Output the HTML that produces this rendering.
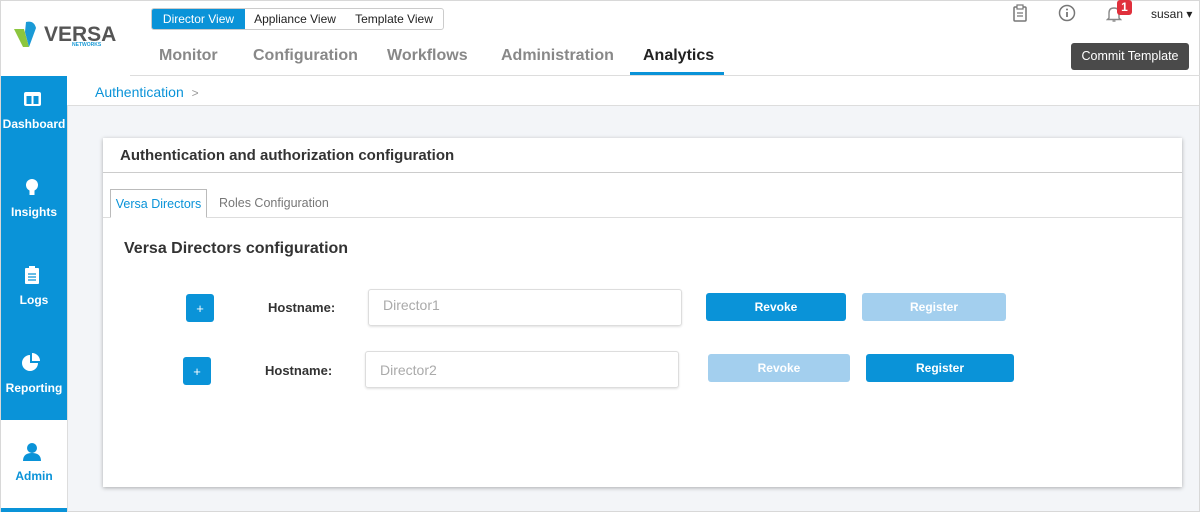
<!DOCTYPE html>
<html><head><meta charset="utf-8"><style>
*{box-sizing:border-box;margin:0;padding:0}
body{width:1200px;height:512px;overflow:hidden;font-family:"Liberation Sans",sans-serif;background:#fff;position:relative}
.abs{position:absolute}
.frame{left:0;top:0;width:1200px;height:512px;border:1px solid #d8d8d8}
.toggle{left:151px;top:8px;height:22px;border:1px solid #ccc;border-radius:3px;display:flex;font-size:12px;background:#fff}
.toggle div{line-height:20px;color:#222;text-align:center}
.toggle .on{background:#0a93d8;color:#fff;border-radius:2px 0 0 2px}
.nav{top:47px;font-size:16px;font-weight:bold;color:#888}
.side{left:1px;top:76px;width:66px;height:344px;background:#0a93d8}
.si{width:66px;text-align:center;color:#fff;font-size:12px;font-weight:bold;left:1px}
.main{left:67px;top:76px;width:1132px;height:435px;background:#f3f5f8}
.crumb{left:67px;top:76px;width:1132px;height:30px;background:#fff;border-bottom:1px solid #ddd}
.card{left:103px;top:138px;width:1079px;height:349px;background:#fff;box-shadow:0 1px 4px rgba(0,0,0,.3)}
.btn{height:28px;border-radius:3px;color:#fff;font-size:12px;font-weight:bold;text-align:center;line-height:28px}
.plus{width:28px;height:28px;background:#0a93d8;border-radius:3px;color:#fff;text-align:center;line-height:30px;font-size:13px}
.inp{height:37px;border:1px solid #ddd;border-radius:3px;box-shadow:0 1px 2px rgba(0,0,0,.12);color:#aaa;font-size:14px;padding-left:14px;line-height:30px}
.lab{font-size:13px;font-weight:bold;color:#333}
</style></head><body>
<div class="abs frame"></div>
<svg class="abs" style="left:14px;top:20px" width="30" height="28" viewBox="0 0 30 28"><path d="M0 9 L10 9 L15 27 L9 27 Z" fill="#8cc63f"/><path d="M12 2 Q20 0 22 8 L15 27 L11 12 Z" fill="#1a9ad6"/></svg>
<div class="abs" style="left:44px;top:23px;font-size:21px;font-weight:bold;color:#555">VERSA</div>
<div class="abs" style="left:72px;top:42px;font-size:5px;font-weight:bold;color:#1a9ad6">NETWORKS</div>
<div class="abs toggle"><div class="on" style="width:93px">Director View</div><div style="width:100px">Appliance View</div><div style="width:98px">Template View</div></div>
<div class="abs nav" style="left:159px">Monitor</div>
<div class="abs nav" style="left:253px">Configuration</div>
<div class="abs nav" style="left:387px">Workflows</div>
<div class="abs nav" style="left:501px">Administration</div>
<div class="abs nav" style="left:643px;color:#222">Analytics</div>
<div class="abs" style="left:630px;top:72px;width:94px;height:3px;background:#0a93d8"></div>
<div class="abs" style="left:130px;top:75px;width:1070px;height:1px;background:#ddd"></div>
<svg class="abs" style="left:1012px;top:4px" width="16" height="18" viewBox="0 0 16 18"><rect x="2" y="3" width="12" height="14" rx="1" fill="none" stroke="#777" stroke-width="1.5"/><rect x="5" y="1" width="6" height="4" fill="#fff" stroke="#777" stroke-width="1.2"/><path d="M5 9h6M5 12h6" stroke="#777" stroke-width="1.2"/></svg>
<svg class="abs" style="left:1058px;top:4px" width="18" height="18" viewBox="0 0 18 18"><circle cx="9" cy="9" r="7.5" fill="none" stroke="#777" stroke-width="1.5"/><path d="M9 8v5" stroke="#777" stroke-width="1.8"/><circle cx="9" cy="5.5" r="1" fill="#777"/></svg>
<svg class="abs" style="left:1106px;top:5px" width="16" height="18" viewBox="0 0 16 18"><path d="M3 13 V8 Q3 3 8 3 Q13 3 13 8 V13 L14.5 14.5 H1.5 Z" fill="none" stroke="#888" stroke-width="1.4"/><path d="M6.5 16 h3" stroke="#888" stroke-width="1.4"/></svg>
<div class="abs" style="left:1117px;top:0;width:15px;height:15px;background:#e0303c;border-radius:3px;color:#fff;font-size:12px;font-weight:bold;text-align:center;line-height:14px">1</div>
<div class="abs" style="left:1151px;top:7px;font-size:12px;color:#222">susan ▾</div>
<div class="abs btn" style="left:1071px;top:43px;width:118px;height:27px;background:#4a4a4a;font-weight:normal;font-size:12.5px;line-height:27px">Commit Template</div>
<div class="abs main"></div>
<div class="abs side"></div>
<div class="abs" style="left:1px;top:508px;width:66px;height:4px;background:#0a93d8"></div>
<div class="abs" style="left:67px;top:76px;width:1px;height:436px;background:#ddd"></div>
<svg class="abs" style="left:24px;top:92px" width="17" height="14"><rect x="0" y="0" width="17" height="14" rx="2" fill="#fff"/><rect x="2.5" y="4" width="5" height="8" fill="#0a93d8"/><rect x="9.5" y="4" width="5" height="8" fill="#0a93d8"/></svg>
<div class="abs si" style="top:117px">Dashboard</div>
<svg class="abs" style="left:25px;top:178px" width="14" height="19"><circle cx="7" cy="7" r="6" fill="#fff"/><rect x="4.5" y="12" width="5" height="5" fill="#fff"/></svg>
<div class="abs si" style="top:205px">Insights</div>
<svg class="abs" style="left:25px;top:266px" width="14" height="18"><rect x="0" y="2" width="14" height="16" rx="1" fill="#fff"/><rect x="4" y="0" width="6" height="4" fill="#fff"/><path d="M3 8h8M3 11h8M3 14h8" stroke="#0a93d8" stroke-width="1.2"/></svg>
<div class="abs si" style="top:293px">Logs</div>
<svg class="abs" style="left:22px;top:353px" width="20" height="18"><path d="M8 2 A8 8 0 1 0 16 10 L8 10 Z" fill="#fff"/><path d="M10 0 A8 8 0 0 1 18 8 L10 8 Z" fill="#fff"/></svg>
<div class="abs si" style="top:381px">Reporting</div>
<svg class="abs" style="left:22px;top:442px" width="20" height="20"><circle cx="10" cy="6" r="5" fill="#0a93d8"/><path d="M1 19 Q1 11 10 11 Q19 11 19 19 Z" fill="#0a93d8"/></svg>
<div class="abs si" style="top:469px;color:#0a93d8">Admin</div>
<div class="abs crumb"></div>
<div class="abs" style="left:95px;top:84px;font-size:14px;color:#0a93d8">Authentication <span style="color:#999;font-size:12px;margin-left:4px">&gt;</span></div>
<div class="abs card"></div>
<div class="abs" style="left:120px;top:147px;font-size:15px;font-weight:bold;color:#333">Authentication and authorization configuration</div>
<div class="abs" style="left:103px;top:172px;width:1079px;height:1px;background:#ccc"></div>
<div class="abs" style="left:103px;top:217px;width:1079px;height:1px;background:#ddd"></div>
<div class="abs" style="left:110px;top:189px;width:97px;height:29px;border:1px solid #bbb;border-bottom:1px solid #fff;background:#fff;color:#0a93d8;font-size:12.5px;text-align:center;line-height:28px">Versa Directors</div>
<div class="abs" style="left:219px;top:196px;font-size:12.5px;color:#777">Roles Configuration</div>
<div class="abs" style="left:124px;top:240px;font-size:16px;font-weight:bold;color:#333">Versa Directors configuration</div>
<div class="abs plus" style="left:186px;top:294px">+</div>
<div class="abs lab" style="left:268px;top:300px">Hostname:</div>
<div class="abs inp" style="left:368px;top:289px;width:314px">Director1</div>
<div class="abs btn" style="left:706px;top:293px;width:140px;background:#0a93d8">Revoke</div>
<div class="abs btn" style="left:862px;top:293px;width:144px;background:#a3cfee">Register</div>
<div class="abs plus" style="left:183px;top:357px">+</div>
<div class="abs lab" style="left:265px;top:363px">Hostname:</div>
<div class="abs inp" style="left:365px;top:351px;width:314px;line-height:36px">Director2</div>
<div class="abs btn" style="left:708px;top:354px;width:142px;background:#a3cfee">Revoke</div>
<div class="abs btn" style="left:866px;top:354px;width:148px;background:#0a93d8">Register</div>
</body></html>
